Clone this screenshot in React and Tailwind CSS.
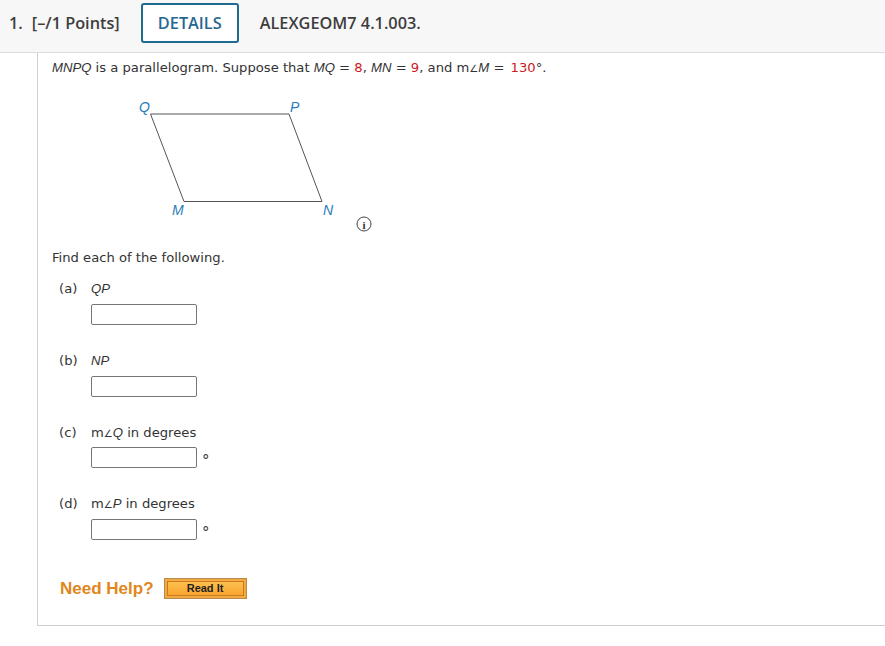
export default function App() {
    const parts = [
        { id: "a", label: <Math>QP</Math>, deg: false, gap: "mt-[7px]" },
        { id: "b", label: <Math>NP</Math>, deg: false, gap: "mt-[7px]" },
        { id: "c", label: <>m<Angle /><Math>Q</Math> in degrees</>, deg: true, gap: "mt-[6px]" },
        { id: "d", label: <>m<Angle /><Math>P</Math> in degrees</>, deg: true, gap: "mt-[7px]" },
    ];

    return (
        <div className="w-[885px] h-[646px] overflow-hidden bg-white font-['DejaVu_Sans',sans-serif] text-[13.15px] text-[#333]">
            {/* Header */}
            <div className="h-[53px] bg-[#f7f7f7] border-b border-[#dcdcdc] flex items-start pt-[3px] pl-[9px] font-['Open_Sans',sans-serif] font-semibold text-[16.3px] text-[#3d3d3d]">
                <span className="leading-[40px]">1.</span>
                <span className="ml-[9px] leading-[40px]">[–/1 Points]</span>
                <div className="ml-[21px] w-[98px] h-[40px] flex items-center justify-center rounded-[3px] border-2 border-[#1f6a8f] bg-white text-[#25688f]">DETAILS</div>
                <span className="ml-[21px] leading-[40px]">ALEXGEOM7 4.1.003.</span>
            </div>

            {/* Question */}
            <div className="ml-[37px] h-[573px] border-l border-b border-[#cfcfcf] pl-[14px] pt-[7px]">
                <p className="h-[16px] leading-[16px]">
                    <Math>MNPQ</Math> is a parallelogram. Suppose that <Math>MQ</Math> = <Red>8</Red>, <Math>MN</Math> = <Red>9</Red>, and m<Angle /><Math>M</Math> = <span className="ml-[2px] text-[#d0181f]">130</span>°.
                </p>

                <svg width="340" height="150" viewBox="0 0 340 150" className="mt-[14px] block">
                    <path d="M98.5 24H237L270 111.5H132Z" fill="none" stroke="#555" strokeWidth="1" />
                    <g fill="#2a7db8" fontSize="14" fontStyle="italic" fontFamily="Liberation Sans, sans-serif">
                        <text x="87" y="22">Q</text>
                        <text x="238" y="22">P</text>
                        <text x="120" y="125">M</text>
                        <text x="271" y="125">N</text>
                    </g>
                    <circle cx="312" cy="134" r="7" fill="none" stroke="#444" strokeWidth="1" />
                    <text x="312" y="138.5" textAnchor="middle" fontSize="11" fontWeight="bold" fontFamily="Liberation Serif, serif" fill="#333">i</text>
                </svg>

                <p className="mt-[10px] h-[16px] leading-[16px]">Find each of the following.</p>

                <div className="pl-[7px]">
                    {parts.map((part, i) => (
                        <div key={part.id} className={i === 0 ? "mt-[15px]" : "mt-[28px]"}>
                            <div className="flex h-[16px] leading-[16px]">
                                <span className="w-[32px]">({part.id})</span>
                                <span>{part.label}</span>
                            </div>
                            <div className={"flex h-[21px] ml-[32px] " + part.gap}>
                                <div className="w-[106px] h-[21px] rounded-[2px] border border-[#767676] bg-white" />
                                {part.deg && <span className="ml-[5px] mt-[4px] text-[15px] leading-[21px]">°</span>}
                            </div>
                        </div>
                    ))}
                </div>

                {/* Need help */}
                <div className="flex items-center h-[21px] mt-[38px] pl-[8px]">
                    <span className="font-['Liberation_Sans',sans-serif] font-bold text-[17px] text-[#e0861c]">Need Help?</span>
                    <button className="ml-[10px] w-[83px] h-[21px] border border-[#b98a4e] bg-[#f2aa3e] p-[2px]">
                        <span className="flex items-center justify-center h-full border border-[#c9791f] bg-gradient-to-b from-[#ffc04d] to-[#f8a52f] font-['Liberation_Sans',sans-serif] font-bold text-[11px] text-[#222]">Read It</span>
                    </button>
                </div>
            </div>
        </div>
    );
}

function Math({ children }) {
    return <i className="font-['Liberation_Sans',sans-serif]">{children}</i>;
}

function Red({ children }) {
    return <span className="text-[#d0181f]">{children}</span>;
}

function Angle() {
    return <span className="text-[10px] leading-none">∠</span>;
}
